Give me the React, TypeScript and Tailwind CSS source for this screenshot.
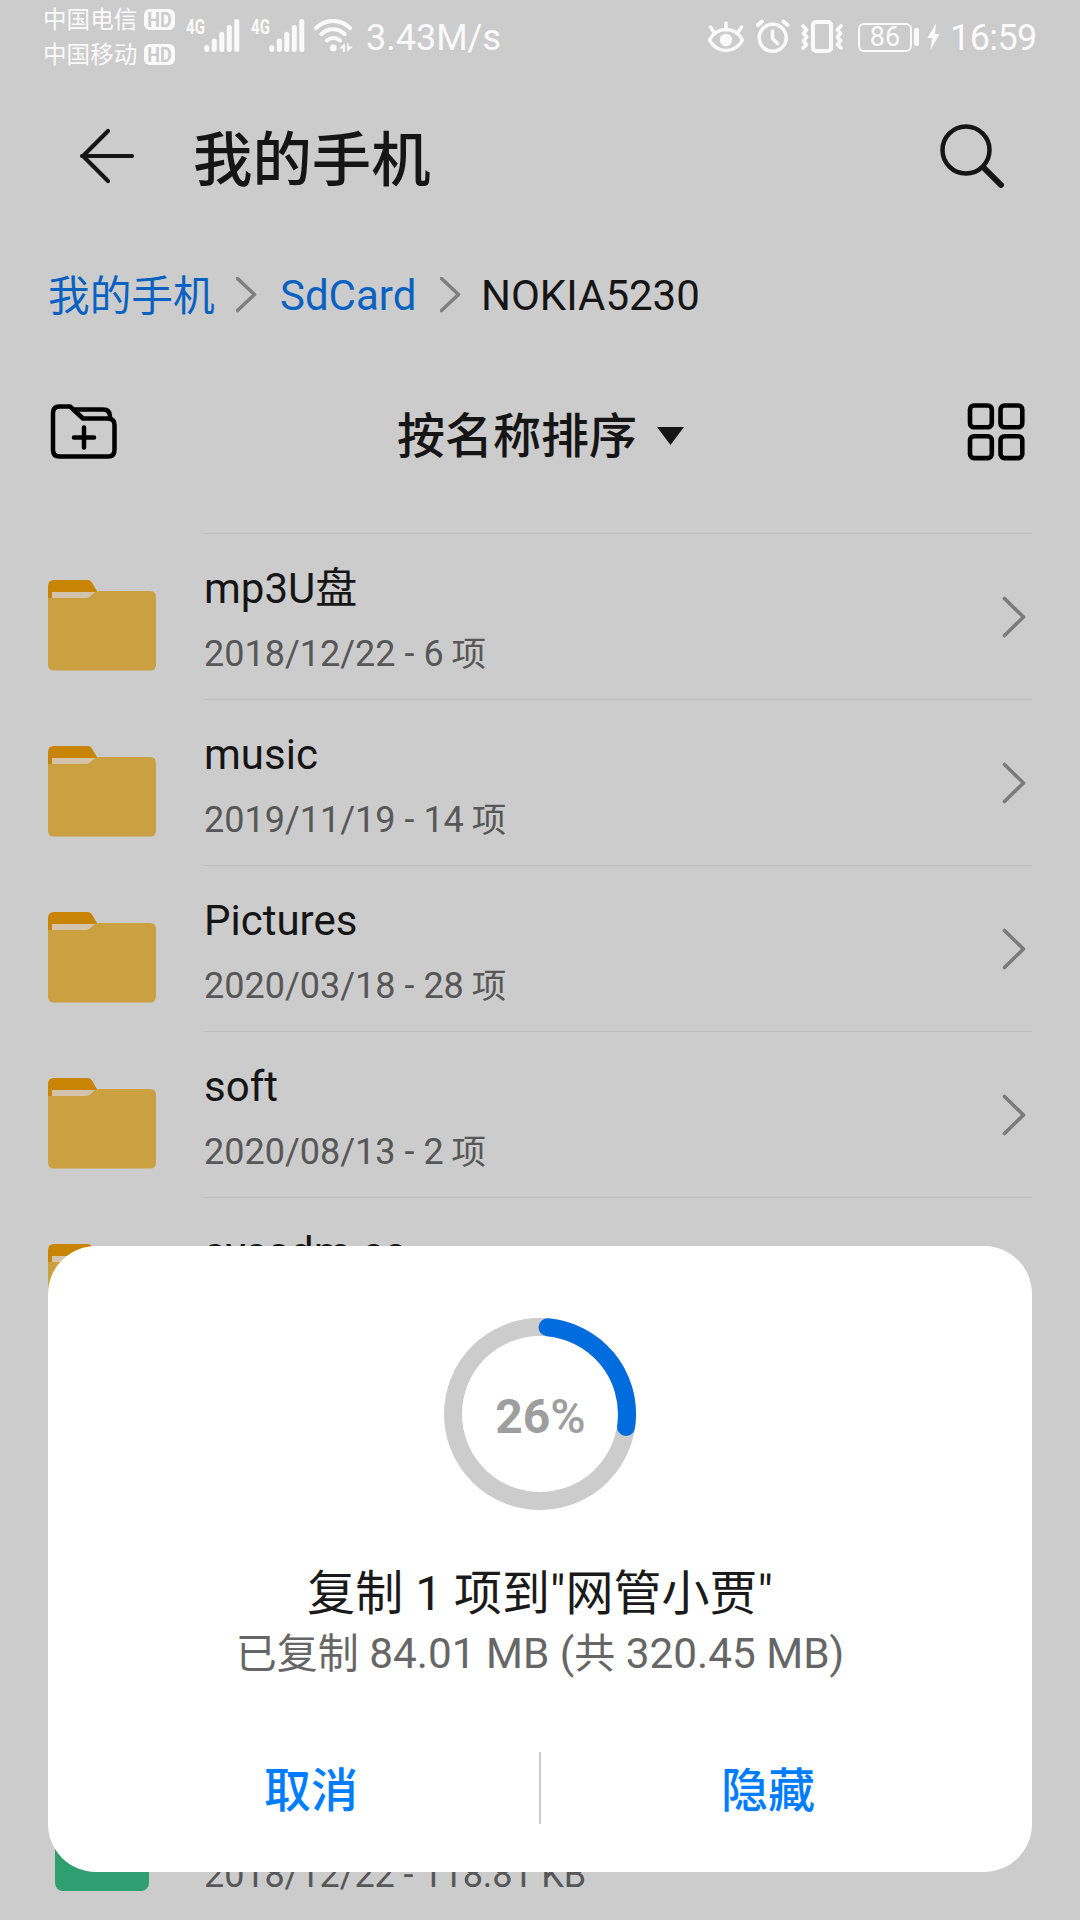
import React from "react";

const folders = [
  { name: "mp3U盘", date: "2018/12/22", count: 6 },
  { name: "music", date: "2019/11/19", count: 14 },
  { name: "Pictures", date: "2020/03/18", count: 28 },
  { name: "soft", date: "2020/08/13", count: 2 },
  { name: "sysadm.cc", date: "2020/08/13", count: 3 },
];

function Signal() {
  return (
    <div className="flex h-[33px] shrink-0 items-start">
      <span className="w-[18px] pl-[1px] text-[21px] font-bold leading-[16px]">
        <span className="inline-block origin-left scale-x-[0.72]">4G</span>
      </span>
      <svg className="ml-[1px]" width="36" height="34" viewBox="0 0 36 34" fill="none" stroke="#fafafa" strokeWidth="5" strokeLinecap="round">
        <path d="M2.800 28.500v2M10.300 22v8.500M17.800 15.300v15.200M25.300 8.500v22M32.800 2.500v28" />
      </svg>
    </div>
  );
}

function Carrier({ name }: { name: string }) {
  return (
    <div className="flex h-[35px] items-center">
      <span className="w-[101px] whitespace-nowrap pt-[2px] text-[23.6px] leading-[35px]">{name}</span>
      <span className="flex h-[21px] w-[31px] items-center justify-center rounded-[6px] bg-[#fafafa] text-[20px] font-bold leading-none text-[#cccccc]">
        <span className="scale-x-90">HD</span>
      </span>
    </div>
  );
}

function StatusBar() {
  return (
    <header className="flex h-[72px] shrink-0 items-start pl-[43px] pr-[42px] text-[#fafafa]">
      <div className="flex w-[142px] shrink-0 flex-col pt-[2px]">
        <Carrier name="中国电信" />
        <Carrier name="中国移动" />
      </div>
      <div className="flex pt-[19px]">
        <div className="w-[65px]"><Signal /></div>
        <div className="w-[63px]"><Signal /></div>
        <svg width="42" height="36" viewBox="0 0 42 36" fill="none" stroke="#fafafa" strokeWidth="4" strokeLinecap="round">
          <path d="M3 9C13-.5 27-.5 37 9M8.500 15C15 8.500 25 8.500 31.500 15M14 21.500C18 18 23 18 27 21.500" />
          <circle cx="20.300" cy="29" r="3.400" fill="#fafafa" stroke="none" />
          <path d="M32 24v9h-2v-3.500H26zM34 33v-9h1.500v3.500H40z" fill="#fafafa" stroke="none" />
        </svg>
      </div>
      <span className="ml-[11px] mt-[14px] text-[36px] leading-[48px]">3.43M/s</span>
      <div className="ml-auto flex h-[74px] items-center">
        <svg width="140" height="40" viewBox="0 0 140 40" fill="none" stroke="#fafafa" strokeWidth="4" strokeLinecap="round" strokeLinejoin="round">
          <path d="M3.500 23C11 9 29 9 36.500 23C29 37 11 37 3.500 23z" strokeWidth="3.500" />
          <circle cx="20" cy="23" r="6.200" fill="#fafafa" stroke="none" />
          <path d="M20 6v7M4.500 10l4 6M35.500 10l-4 6" strokeWidth="3.500" />
          <circle cx="66.700" cy="20.800" r="13.500" strokeWidth="3.500" />
          <path d="M66.500 14v7.500l5 5" strokeWidth="3.500" />
          <path d="M52 8l4-3.500M81.500 8l-4-3.500" />
          <rect x="107" y="5" width="18" height="29" rx="3" />
          <path d="M97 9l3.500 3.500-3 4 3 3.500-3 4 3 3.500-3.500 3.500M135 9l-3.500 3.500 3 4-3 3.500 3 4-3 3.500 3.500 3.500" strokeWidth="3.800" />
        </svg>
        <div className="ml-[12px] flex h-[29px] w-[54px] items-center justify-center rounded-[6px] border-2 border-[#fafafa] text-[27px] leading-none">
          <span className="pt-[1px]">86</span>
        </div>
        <div className="ml-[2px] h-[18px] w-[5px] rounded-[2px] bg-[#fafafa]" />
        <svg className="ml-[7px]" width="14" height="28" viewBox="0 0 14 28" fill="#fafafa">
          <path d="M10 .5L1.300 15h5L4.500 27L13.500 11H9z" />
        </svg>
        <span className="ml-[10px] w-[88px] whitespace-nowrap pt-[2px] text-[36px] leading-[74px] tracking-[-0.600px]">16:59</span>
      </div>
    </header>
  );
}

function RowChevron() {
  return (
    <svg width="24" height="42" viewBox="0 0 24 42" fill="none" stroke="#7b7b7b" strokeWidth="3.600" strokeLinecap="round" strokeLinejoin="round">
      <path d="M2.500 2.500L21.500 21L2.500 39.500" />
    </svg>
  );
}

function CrumbChevron() {
  return (
    <svg width="22" height="38" viewBox="0 0 22 38" fill="none" stroke="#7f7f7f" strokeWidth="3.600" strokeLinecap="round" strokeLinejoin="round">
      <path d="M1.500 1.500L18.500 17.500L1.500 33.500" />
    </svg>
  );
}

function FolderIcon() {
  return (
    <svg width="108" height="91" viewBox="0 0 108 91">
      <path d="M0 22V6Q0 0 6 0H40Q42.500 0 44 2.500L50 13V22z" fill="#c88404" />
      <path d="M4 12H50V20H4z" fill="#d2c3aa" />
      <path d="M0 18H37Q40 18 42 16.500L46 13Q48 11 51 11H102Q108 11 108 17V84.500Q108 90.500 102 90.500H6Q0 90.500 0 84.500z" fill="#cba041" />
    </svg>
  );
}

function FolderRow({ name, date, count }: { name: string; date: string; count: number }) {
  return (
    <li className="flex h-[166px] shrink-0 px-[48px]">
      <div className="w-[156px] shrink-0 pt-[47px]">
        <FolderIcon />
      </div>
      <div className="flex grow items-center justify-between border-t border-[#bfbfbf] pr-[6px]">
        <div className="flex h-full flex-col pt-[25px]">
          <span className="text-[42px] leading-[60px] text-[#151515]">{name}</span>
          <span className="mt-[11px] text-[36px] leading-[48px] text-[#575757]">
            {date} - {count} <span className="-ml-[1px] text-[34.500px]">项</span>
          </span>
        </div>
        <RowChevron />
      </div>
    </li>
  );
}

function ProgressRing({ percent }: { percent: number }) {
  return (
    <div className="grid place-items-center">
      <svg className="col-start-1 row-start-1" width="192" height="192" viewBox="0 0 192 192" fill="none" strokeWidth="18">
        <circle cx="96" cy="96" r="87" stroke="#cccccc" />
        <circle cx="96" cy="96" r="87" stroke="#006cde" strokeLinecap="round" pathLength="100" strokeDasharray={`${percent} 100`} transform="rotate(-85 96 96)" />
      </svg>
      <div className="col-start-1 row-start-1 flex items-baseline pl-[1px] pt-[5px] text-[48px] leading-[56px] text-[#9e9e9e]">
        <span className="font-bold">{percent}</span>
        <span className="font-medium">%</span>
      </div>
    </div>
  );
}

function CopyDialog() {
  return (
    <section className="absolute left-[48px] top-[1246px] flex h-[626px] w-[984px] flex-col items-center rounded-[48px] bg-white pt-[72px]">
      <ProgressRing percent={26} />
      <h2 className="mt-[54px] whitespace-nowrap text-[48px] leading-[60px] text-[#1a1a1a]">复制 1 项到"网管小贾"</h2>
      <p className="mt-[2px] whitespace-nowrap text-[42.300px] leading-[56px] text-[#666666]">
        <span className="text-[41px]">已复制</span> 84.01 MB (<span className="text-[41px]">共</span> 320.45 MB)
      </p>
      <div className="mt-[61px] flex h-[96px] w-full items-center px-[34px] text-[47px] font-medium text-[#007dff]">
        <button className="grow basis-0 leading-[96px]">
          <span className="ml-[1px]">取消</span>
        </button>
        <div className="mb-[6px] h-[72px] w-[2px] bg-[#cccccc]" />
        <button className="grow basis-0 leading-[96px]">
          <span className="mr-[3px]">隐藏</span>
        </button>
      </div>
    </section>
  );
}

export default function App() {
  return (
    <div className="relative flex h-[1920px] w-[1080px] flex-col overflow-hidden bg-[#cccccc] font-['Roboto','Noto_Sans_CJK_SC',sans-serif]">
      <StatusBar />
      <div className="flex h-[168px] shrink-0 items-center px-[76px]">
        <svg width="64" height="64" viewBox="0 0 64 64" fill="none" stroke="#151515" strokeWidth="4.200" strokeLinecap="round" strokeLinejoin="round">
          <path d="M56 32H6M32 7L7 32L32 57" />
        </svg>
        <h1 className="ml-[53px] pt-[10px] text-[59.400px] font-medium leading-[72px] text-[#151515]">我的手机</h1>
        <svg className="ml-auto" width="68" height="68" viewBox="0 0 68 68" fill="none" stroke="#151515" strokeLinecap="round">
          <circle cx="30" cy="28" r="23.500" strokeWidth="4.500" />
          <path d="M48 46L65 63" strokeWidth="6" />
        </svg>
      </div>
      <nav className="flex h-[111px] shrink-0 items-center pl-[48px] text-[42px] leading-[60px]">
        <span className="w-[188px] pt-[3px] text-[41.700px] text-[#0961c2]">我的手机</span>
        <CrumbChevron />
        <span className="ml-[22px] w-[160px] text-[#0961c2]">SdCard</span>
        <CrumbChevron />
        <span className="ml-[19px] text-[#151515]">NOKIA5230</span>
      </nav>
      <div className="flex h-[182px] shrink-0 items-center justify-between pb-[20px] pl-[50px] pr-[54px]">
        <svg width="70" height="58" viewBox="0 0 70 58" fill="none" stroke="#000000" strokeWidth="4.500" strokeLinecap="round" strokeLinejoin="round">
          <path d="M20 3.500H9.500Q3 3.500 3 10V47Q3 53.500 9.500 53.500H58Q64.500 53.500 64.500 47V22Q64.500 15.500 58 15.500H33L20 3.500z" />
          <path d="M25 6.500H53Q60 6.500 60 13.500V16M34 24.500v20M24 34.500h20" />
        </svg>
        <div className="flex items-center pr-[5px] pt-[9px] text-[48px] font-medium leading-[60px] text-[#151515]">
          <span>按名称排序</span>
          <svg className="ml-[20px] -mt-[2px]" width="27" height="18" viewBox="0 0 27 18" fill="#151515">
            <path d="M0 0H27L13.500 18z" />
          </svg>
        </div>
        <svg width="60" height="60" viewBox="0 0 60 60" fill="none" stroke="#000000" strokeWidth="4.600">
          <rect x="4" y="3.500" width="21.800" height="21.800" rx="4" />
          <rect x="34.500" y="3.500" width="21.800" height="21.800" rx="4" />
          <rect x="4" y="34.300" width="21.800" height="21.800" rx="4" />
          <rect x="34.500" y="34.300" width="21.800" height="21.800" rx="4" />
        </svg>
      </div>
      <ul className="flex flex-col">
        {folders.map((folder) => (
          <FolderRow key={folder.name} {...folder} />
        ))}
        <li className="mt-[408px] flex h-[166px] shrink-0 pl-[55px]">
          <div className="mt-[29px] h-[91px] w-[94px] rounded-[8px] bg-[#2f9e70]" />
          <span className="ml-[55px] mt-[80px] text-[36px] leading-[48px] tracking-[-0.080px] text-[#575757]">2018/12/22 - 118.81 KB</span>
        </li>
      </ul>
      <CopyDialog />
    </div>
  );
}
